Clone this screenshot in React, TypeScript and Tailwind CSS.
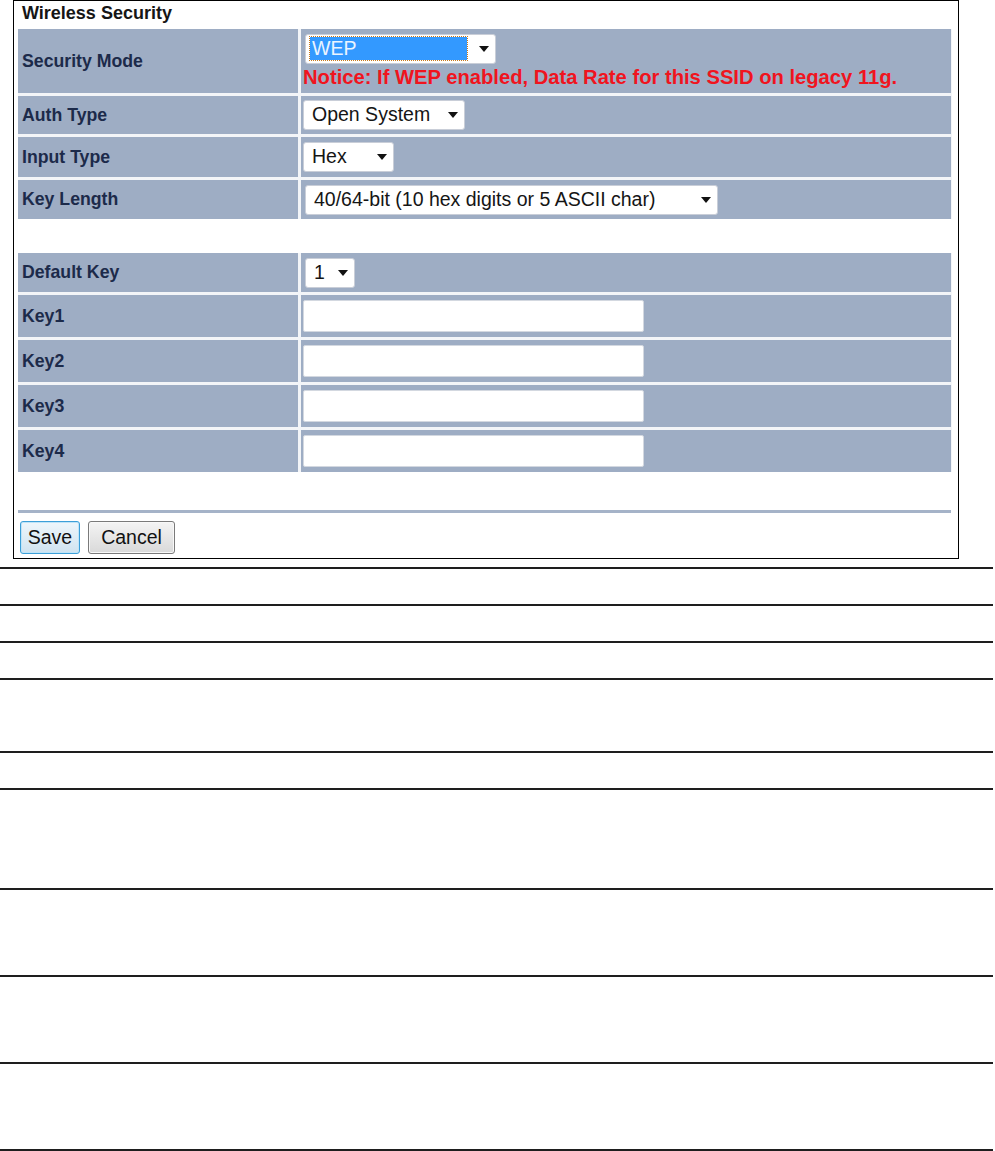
import React from 'react';

const FONT = "font-['Liberation_Sans',Arial,Helvetica,sans-serif]";

// little black dropdown triangle
function Arrow() {
  return (
    <svg width="10" height="6" viewBox="0 0 10 6" className="shrink-0">
      <path d="M0 0 L10 0 L5 6 Z" fill="#111" />
    </svg>
  );
}

function FakeSelect({ text, width, active }: { text: string; width: number; active?: boolean }) {
  return (
    <div
      className="flex items-center justify-between h-[30px] bg-white border border-[#c9ced8] rounded-[3px] pl-[4px] pr-[6px] text-[19.5px] leading-none text-[#151515]"
      style={{ width }}
    >
      {active ? (
        <span className="flex items-center h-[23px] w-[157px] bg-[#3399ff] outline outline-1 outline-dotted outline-[#c8781c] text-[#eaf4ff] pl-[2px]">
          {text}
        </span>
      ) : (
        <span className="pl-[4px]">{text}</span>
      )}
      <Arrow />
    </div>
  );
}

function KeyInput() {
  return <div className="h-[32px] w-[341px] bg-white border border-[#d3d8e0] rounded-[2px]" />;
}

type Row = { label: string; h: number; content: React.ReactNode };

const TOP_ROWS: Row[] = [
  {
    label: 'Security Mode',
    h: 64,
    content: (
      <div className="flex flex-col">
        <div className="pl-[2px]">
          <FakeSelect text="WEP" width={191} active />
        </div>
        <p className="mt-[2px] text-[20.2px] leading-[23px] font-bold text-[#f0141e]">
          Notice: If WEP enabled, Data Rate for this SSID on legacy 11g.
        </p>
      </div>
    ),
  },
  { label: 'Auth Type', h: 38, content: <FakeSelect text="Open System" width={162} /> },
  { label: 'Input Type', h: 40, content: <FakeSelect text="Hex" width={91} /> },
  {
    label: 'Key Length',
    h: 39,
    content: (
      <div className="pl-[2px]">
        <FakeSelect text="40/64-bit (10 hex digits or 5 ASCII char)" width={413} />
      </div>
    ),
  },
];

const KEY_ROWS: Row[] = [
  {
    label: 'Default Key',
    h: 39,
    content: (
      <div className="pl-[2px]">
        <FakeSelect text="1" width={50} />
      </div>
    ),
  },
  { label: 'Key1', h: 42, content: <KeyInput /> },
  { label: 'Key2', h: 42, content: <KeyInput /> },
  { label: 'Key3', h: 42, content: <KeyInput /> },
  { label: 'Key4', h: 42, content: <KeyInput /> },
];

function FormRow({ row }: { row: Row }) {
  return (
    <>
      <div
        className="flex items-center bg-[#9eadc4] pl-[4px] text-[17.7px] font-bold text-[#1c2a4a]"
        style={{ height: row.h }}
      >
        {row.label}
      </div>
      <div className="flex items-center bg-[#9eadc4] pl-[2px]" style={{ height: row.h }}>
        {row.content}
      </div>
    </>
  );
}

// heights of the empty rows under the panel (each ends in a dark rule)
const RULES = [10, 37, 37, 37, 73, 37, 100, 87, 87, 87];

export default function App() {
  return (
    <div className={`${FONT} bg-white w-[995px] h-[1151px] overflow-hidden`}>
      <div className="ml-[13px] w-[946px] h-[559px] border border-black pl-[4px] pr-[6px] flex flex-col">
        <div className="h-[28px] pl-[4px] leading-[24px] text-[18px] font-bold text-[#161616]">
          Wireless Security
        </div>

        <div className="grid grid-cols-[280px_650px] gap-[3px] bg-[#f3f5f8]">
          {TOP_ROWS.map(r => (
            <FormRow key={r.label} row={r} />
          ))}
        </div>

        <div className="h-[34px]" />

        <div className="grid grid-cols-[280px_650px] gap-[3px] bg-[#f3f5f8]">
          {KEY_ROWS.map(r => (
            <FormRow key={r.label} row={r} />
          ))}
        </div>

        <div className="h-[38px]" />
        <div className="h-[3px] w-[933px] bg-[#a5b3c8]" />

        <div className="flex gap-[8px] mt-[8px] pl-[2px]">
          <button className="h-[33px] w-[60px] rounded-[3px] border border-[#3c9fd8] bg-gradient-to-b from-[#eef6fb] to-[#cfe3f0] shadow-[inset_0_0_0_1px_#bfe4f8] text-[19.5px] leading-none text-[#111]">
            Save
          </button>
          <button className="h-[33px] w-[87px] rounded-[3px] border border-[#7a7a7a] bg-gradient-to-b from-[#f4f4f4] to-[#d9d9d9] shadow-[inset_0_0_0_1px_#f8f8f8] text-[19.5px] leading-none text-[#111]">
            Cancel
          </button>
        </div>
      </div>

      <div className="flex flex-col">
        {RULES.map((h, i) => (
          <div key={i} className="w-[993px] border-b-2 border-[#1e1e1e]" style={{ height: h }} />
        ))}
      </div>
    </div>
  );
}
